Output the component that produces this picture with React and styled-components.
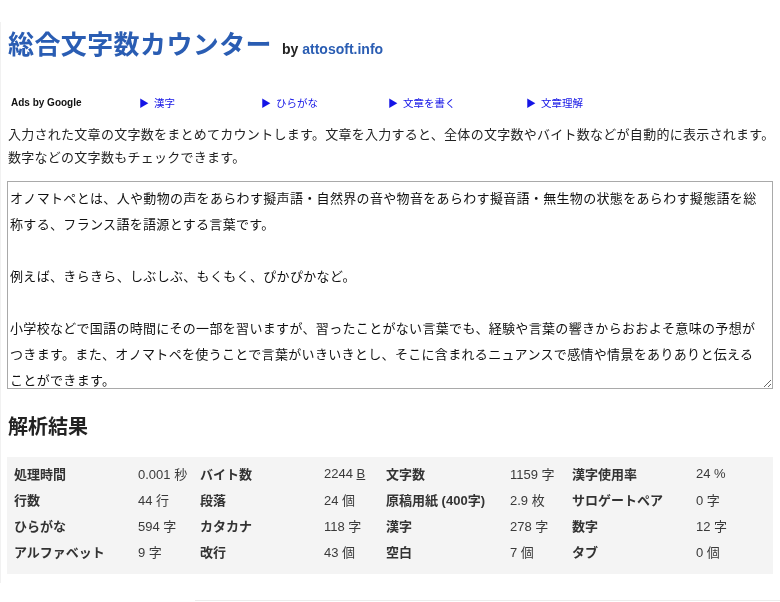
import React from 'react';
import styled, { createGlobalStyle } from 'styled-components';

const GlobalStyle = createGlobalStyle`
  body {
    margin: 0;
    background: #fff;
    font-family: "Liberation Sans", "Noto Sans CJK JP", sans-serif;
    color: #222;
  }
`;

// Page wrapper
const Page = styled.div`
  margin-top: 22px;
  padding: 0 0 0 6px;
  border-left: 1px solid #f1f1f1;
  height: 561px;
  box-sizing: border-box;
`;

const Header = styled.header`
  display: flex;
  align-items: baseline;
  padding-top: 10px;
  padding-left: 1px;
`;

const Title = styled.h1`
  margin: 0;
  font-size: 26px;
  line-height: 26px;
  font-weight: bold;
  color: #2a5db3;
  letter-spacing: 0.4px;
`;

const Byline = styled.span`
  margin-left: 10px;
  font-size: 14px;
  font-weight: bold;
  color: #222;

  a {
    color: #2a5db3;
    text-decoration: none;
  }
`;

// Ads row
const AdsRow = styled.div`
  display: flex;
  margin-top: 37px;
  padding-left: 4px;
  height: 14px;
  align-items: center;
  font-size: 10px;
`;

const AdsLabel = styled.span`
  width: 128px;
  font-weight: bold;
  color: #111;
`;

const AdLink = styled.a`
  width: ${p => p.$w}px;
  color: #1414e6;
  text-decoration: none;
  font-size: 10.5px;

  &::before {
    content: '▶';
    font-size: 10px;
    margin-right: 5px;
  }
`;

const Intro = styled.p`
  margin: 14px 0 0 1px;
  font-size: 13px;
  letter-spacing: 0.27px;
  line-height: 23px;
  color: #222;
`;

const TextBox = styled.textarea`
  display: block;
  box-sizing: border-box;
  width: 766px;
  height: 208px;
  margin: 12px 0 0 0;
  padding: 4px 10px 0 2px;
  border: 1px solid #a9a9a9;
  font-family: "Liberation Sans", "Noto Sans CJK JP", sans-serif;
  font-size: 13px;
  letter-spacing: 0.33px;
  line-height: 26px;
  color: #111;
  scrollbar-width: none;
  outline: none;
`;

const SectionTitle = styled.h2`
  margin: 26px 0 0 1px;
  font-size: 20px;
  line-height: 24px;
  font-weight: bold;
  color: #222;
`;

const ResultGrid = styled.div`
  width: 766px;
  box-sizing: border-box;
  display: grid;
  grid-template-columns: repeat(4, 124px 62px);
  grid-auto-rows: 25.8px;
  align-items: center;
  margin-top: 18px;
  padding: 4px 7px 10px 7px;
  background: #f4f4f4;
  font-size: 13px;
  color: #333;
`;

const Label = styled.div`
  font-weight: bold;
  white-space: nowrap;
`;

const Value = styled.div`
  white-space: nowrap;
  color: #3a3a3a;

  abbr {
    text-decoration: underline;
  }
`;

const Footer = styled.div`
  margin: 17px 0 0 195px;
  border-top: 1px solid #ececec;
`;

const sampleText = `オノマトペとは、人や動物の声をあらわす擬声語・自然界の音や物音をあらわす擬音語・無生物の状態をあらわす擬態語を総称する、フランス語を語源とする言葉です。

例えば、きらきら、しぶしぶ、もくもく、ぴかぴかなど。

小学校などで国語の時間にその一部を習いますが、習ったことがない言葉でも、経験や言葉の響きからおおよそ意味の予想がつきます。また、オノマトペを使うことで言葉がいきいきとし、そこに含まれるニュアンスで感情や情景をありありと伝えることができます。

日本語はオノマトペが豊富な言語といわれ、その数は数千にのぼるともいわれています。`;

const results = [
  ['処理時間', '0.001 秒', 'バイト数', 'B', '文字数', '1159 字', '漢字使用率', '24 %'],
  ['行数', '44 行', '段落', '24 個', '原稿用紙 (400字)', '2.9 枚', 'サロゲートペア', '0 字'],
  ['ひらがな', '594 字', 'カタカナ', '118 字', '漢字', '278 字', '数字', '12 字'],
  ['アルファベット', '9 字', '改行', '43 個', '空白', '7 個', 'タブ', '0 個'],
];

const adLinks = [
  { text: '漢字', w: 122 },
  { text: 'ひらがな', w: 127 },
  { text: '文章を書く', w: 138 },
  { text: '文章理解', w: 100 },
];

const App = () => {
  return (
    <>
      <GlobalStyle />
      <Page>
        <Header>
          <Title>総合文字数カウンター</Title>
          <Byline>
            by <a href="#">attosoft.info</a>
          </Byline>
        </Header>

        <AdsRow>
          <AdsLabel>Ads by Google</AdsLabel>
          {adLinks.map(l => (
            <AdLink key={l.text} href="#" $w={l.w}>{l.text}</AdLink>
          ))}
        </AdsRow>

        <Intro>
          入力された文章の文字数をまとめてカウントします。文章を入力すると、全体の文字数やバイト数などが自動的に表示されます。数字などの文字数もチェックできます。
        </Intro>

        <TextBox defaultValue={sampleText} spellCheck={false} />

        <SectionTitle>解析結果</SectionTitle>

        <ResultGrid>
          {results.map((row, i) =>
            row.map((cell, j) =>
              j % 2 === 0 ? (
                <Label key={`${i}-${j}`}>{cell}</Label>
              ) : cell === 'B' ? (
                <Value key={`${i}-${j}`}>2244 <abbr title="バイト">B</abbr></Value>
              ) : (
                <Value key={`${i}-${j}`}>{cell}</Value>
              )
            )
          )}
        </ResultGrid>
      </Page>
      <Footer />
    </>
  );
};

export default App;
